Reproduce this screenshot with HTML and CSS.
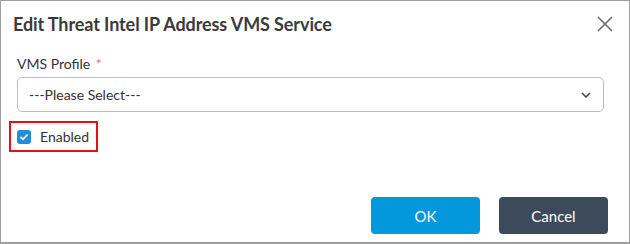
FILE: index.html
```html
<!DOCTYPE html>
<html>
<head>
<meta charset="utf-8">
<link rel="stylesheet" href="styles.css">
</head>
<body>
<div class="dialog">
  <div class="header">
    <h1 class="title">Edit Threat Intel IP Address VMS Service</h1>
    <button class="close" aria-label="Close">
      <svg width="16" height="16" viewBox="0 0 16 16"><path d="M1 1L15 15M15 1L1 15" stroke="#6b6b6b" stroke-width="1.6" fill="none"/></svg>
    </button>
  </div>
  <div class="body">
    <label class="label">VMS Profile <span class="req">*</span></label>
    <div class="select">
      <span class="select-text">---Please Select---</span>
      <svg class="chev" width="10" height="6" viewBox="0 0 10 6"><path d="M1 1L5 5L9 1" stroke="#3c4655" stroke-width="1.5" fill="none"/></svg>
    </div>
    <div class="check-row">
      <span class="checkbox">
        <svg width="10" height="8" viewBox="0 0 10 8"><path d="M1.5 4L4 6.3L8.5 1.5" stroke="#fff" stroke-width="1.8" fill="none"/></svg>
      </span>
      <span class="check-label">Enabled</span>
    </div>
  </div>
  <div class="footer">
    <button class="btn ok">OK</button>
    <button class="btn cancel">Cancel</button>
  </div>
</div>
</body>
</html>
```
FILE: styles.css
```css
html, body { margin: 0; padding: 0; background: #fff; }
.dialog {
  width: 630px; height: 244px; box-sizing: border-box;
  border: 1px solid #9e9e9e; border-bottom-width: 2px;
  font-family: Lato, "Open Sans", sans-serif; color: #333;
  display: flex; flex-direction: column;
}
.header {
  display: flex; justify-content: space-between; align-items: center;
  padding: 8px 16px 0 12px; height: 30px;
}
.title { margin: 0; font-size: 18px; font-weight: 700; color: #3a3a3a; letter-spacing: -0.1px; }
.close { border: 0; background: none; padding: 0; width: 16px; height: 16px; display: flex; }
.body { padding: 17px 25px 0 16px; }
.label { display: block; font-size: 14px; color: #333; line-height: 16px; }
.req { color: #e8707a; margin-left: 2px; }
.select {
  margin-top: 5px; height: 35px; box-sizing: border-box;
  border: 1px solid #bdbdbd; border-radius: 5px;
  display: flex; align-items: center; justify-content: space-between;
  padding: 0 12px 0 11px;
}
.select-text { font-size: 14px; color: #333; }
.check-row {
  margin-top: 9px; margin-left: -8px; width: 89px; height: 31px; box-sizing: border-box;
  border: 2px solid #e50f14; display: flex; align-items: center; padding-left: 6px; gap: 9px;
}
.checkbox {
  width: 14px; height: 14px; border-radius: 3px; background: #1e8fd8;
  display: flex; align-items: center; justify-content: center;
}
.check-label { font-size: 14px; color: #333; }
.footer { margin-top: auto; display: flex; justify-content: flex-end; gap: 19px; padding: 0 21px 8px 0; }
.btn {
  width: 109px; height: 37px; border: 0; border-radius: 4px; color: #fff;
  font-family: Lato, sans-serif; font-size: 15px;
}
.ok { background: #0398dc; }
.cancel { background: #3c4a5b; }
```
